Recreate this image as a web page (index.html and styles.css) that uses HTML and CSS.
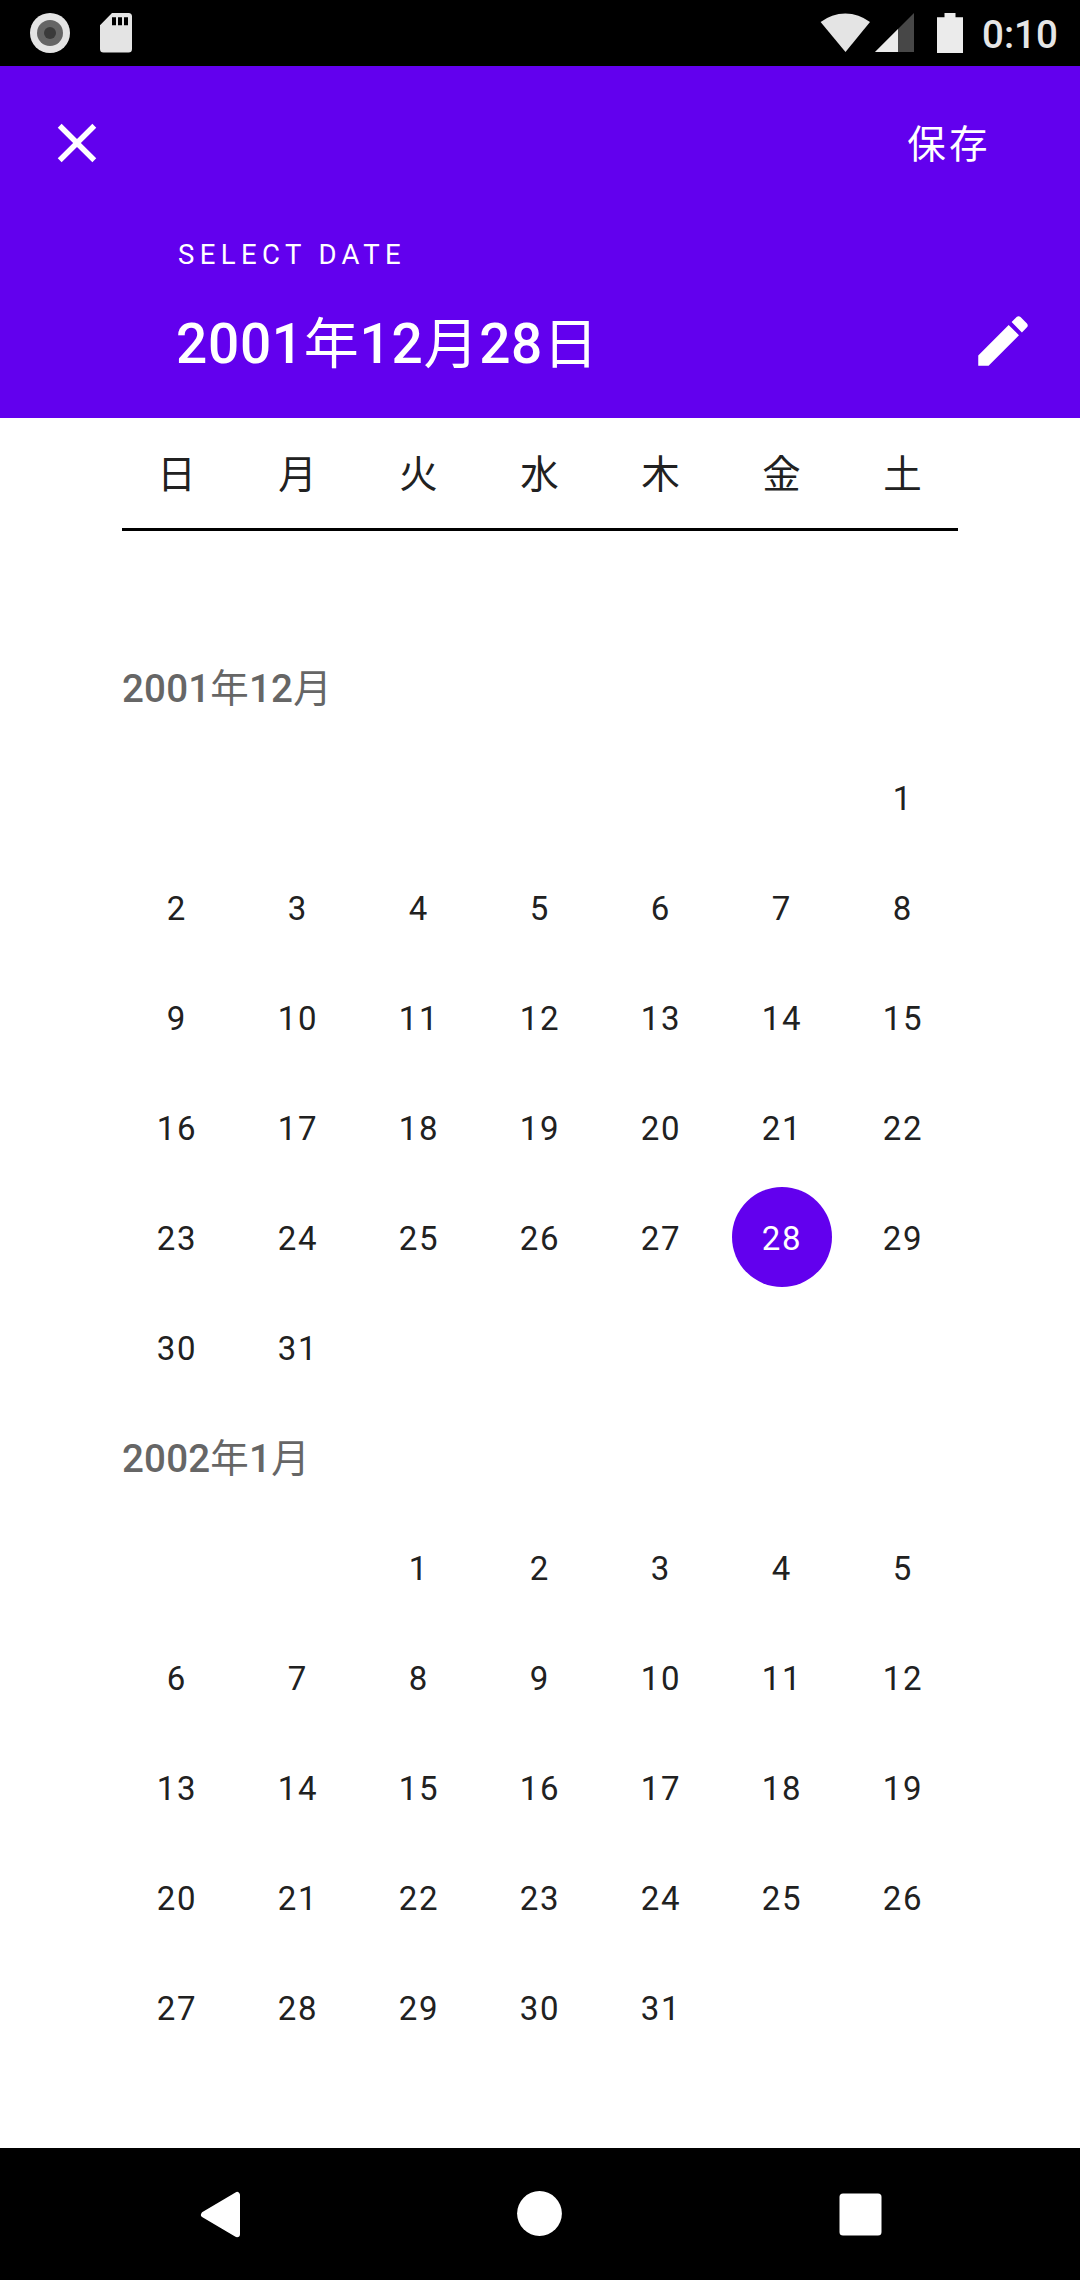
FILE: index.html
```html
<!DOCTYPE html>
<html lang="ja">
<head>
<meta charset="utf-8">
<title>日付の選択</title>
<link rel="stylesheet" href="styles.css">
</head>
<body>
<div class="screen">
  <div class="status-bar">
    <div class="status-left">
      <svg width="40" height="40" viewBox="0 0 40 40"><circle cx="20" cy="20" r="20" fill="#e4e4e4"/><circle cx="20" cy="20" r="13" fill="#656565"/><circle cx="20" cy="20" r="6" fill="#3a3a3a"/></svg>
      <svg width="32" height="40" viewBox="0 0 32 40"><path fill="#e4e4e4" fill-rule="evenodd" d="M12 0H28.500a3.500 3.500 0 0 1 3.500 3.500V36a3.500 3.500 0 0 1-3.500 3.500H3.500A3.500 3.500 0 0 1 0 36V12.300ZM12 4.300V12.300H16V4.300ZM18 4.300V12.300H22V4.300ZM24 4.300V12.300H28V4.300Z"/></svg>
    </div>
    <div class="status-right">
      <svg width="50" height="40" viewBox="0 0 50 40"><path fill="#e4e4e4" d="M.6 9A40 40 0 0 1 50 9L25.500 39Z"/></svg>
      <svg class="signal" width="39" height="40" viewBox="0 0 39 40"><path fill="#474747" d="M39 0V39H0Z"/><path fill="#ebebeb" d="M23 16V39H0Z"/></svg>
      <svg class="battery" width="26" height="40" viewBox="0 0 26 40"><path fill="#ebebeb" d="M7.500 0H18.500V4.200H26V40H0V4.200H7.500Z"/></svg>
      <span class="clock">0:10</span>
    </div>
  </div>

  <header class="header">
    <div class="toolbar">
      <svg width="66" height="66" viewBox="0 0 24 24"><path fill="#fff" d="M19 6.410 17.590 5 12 10.590 6.410 5 5 6.410 10.590 12 5 17.590 6.410 19 12 13.410 17.590 19 19 17.590 13.410 12z"/></svg>
      <span class="save">保存</span>
    </div>
    <div class="overline">SELECT DATE</div>
    <div class="selection">
      <h1 class="selected-date">2001<span class="unit">年</span>12<span class="unit">月</span>28<span class="unit">日</span></h1>
      <svg width="66" height="66" viewBox="0 0 24 24"><path fill="#fff" d="M3 17.250V21h3.750L17.810 9.940l-3.750-3.750L3 17.250zM20.710 7.040c.39-.39.39-1.020 0-1.410l-2.340-2.340c-.39-.39-1.020-.39-1.410 0l-1.830 1.830 3.750 3.750 1.830-1.830z"/></svg>
    </div>
  </header>

  <div class="weekdays week">
    <span>日</span><span>月</span><span>火</span><span>水</span><span>木</span><span>金</span><span>土</span>
  </div>

  <main class="months">
    <h2 class="month-title">2001<span class="unit">年</span>12<span class="unit">月</span></h2>
    <div class="week days">
      <span class="from-sat">1</span>
      <span>2</span><span>3</span><span>4</span><span>5</span><span>6</span><span>7</span><span>8</span>
      <span>9</span><span>10</span><span>11</span><span>12</span><span>13</span><span>14</span><span>15</span>
      <span>16</span><span>17</span><span>18</span><span>19</span><span>20</span><span>21</span><span>22</span>
      <span>23</span><span>24</span><span>25</span><span>26</span><span>27</span><span class="selected">28</span><span>29</span>
      <span>30</span><span>31</span>
    </div>
    <h2 class="month-title">2002<span class="unit">年</span>1<span class="unit">月</span></h2>
    <div class="week days">
      <span class="from-tue">1</span><span>2</span><span>3</span><span>4</span><span>5</span>
      <span>6</span><span>7</span><span>8</span><span>9</span><span>10</span><span>11</span><span>12</span>
      <span>13</span><span>14</span><span>15</span><span>16</span><span>17</span><span>18</span><span>19</span>
      <span>20</span><span>21</span><span>22</span><span>23</span><span>24</span><span>25</span><span>26</span>
      <span>27</span><span>28</span><span>29</span><span>30</span><span>31</span>
    </div>
  </main>

  <nav class="nav-bar">
    <svg width="60" height="60" viewBox="0 0 60 60"><path fill="#fff" stroke="#fff" stroke-width="6" stroke-linejoin="round" d="M14 32.700 47 13V52.200Z"/></svg>
    <svg width="60" height="60" viewBox="0 0 60 60"><circle cx="29.500" cy="31.500" r="22.400" fill="#fff"/></svg>
    <svg width="60" height="60" viewBox="0 0 60 60"><rect x="9.500" y="11.500" width="42" height="42" rx="3.500" fill="#fff"/></svg>
  </nav>
</div>
</body>
</html>
```
FILE: styles.css
```css
* {
  box-sizing: border-box;
}

body {
  margin: 0;
  background: #fff;
  font-family: Roboto, "Noto Sans CJK JP", sans-serif;
  color: #212121;
}

svg {
  display: block;
  flex: none;
}

.screen {
  display: flex;
  flex-direction: column;
  width: 1080px;
  height: 2280px;
}

.status-bar {
  display: flex;
  justify-content: space-between;
  height: 66px;
  padding: 13px 21px 0 30px;
  background: #000;
}

.status-left {
  display: flex;
  gap: 30px;
}

.status-right {
  display: flex;
}

.signal {
  margin-left: 5px;
}

.battery {
  margin: 0 19px 0 23px;
}

.clock {
  width: 77px;
  color: #e6e6e6;
  font-size: 38.5px;
  font-weight: 500;
  line-height: 43px;
}

.unit {
  font-weight: 400;
}

.header {
  height: 352px;
  background: #6200ee;
  color: #fff;
}

.toolbar {
  display: flex;
  justify-content: space-between;
  align-items: center;
  height: 154px;
  padding: 0 89px 0 44px;
}

.save {
  padding-top: 3px;
  font-size: 38.5px;
  font-weight: 400;
  line-height: 66px;
  letter-spacing: 3.4px;
}

.overline {
  margin-top: 17px;
  padding-left: 178px;
  font-size: 27.5px;
  line-height: 36px;
  letter-spacing: 5.4px;
}

.selection {
  display: flex;
  justify-content: space-between;
  align-items: center;
  height: 66px;
  margin-top: 35px;
  padding: 0 44px 0 176px;
}

.selected-date {
  margin: 0;
  padding-top: 6px;
  font-size: 55px;
  font-weight: 500;
  line-height: 66px;
  letter-spacing: 0.69px;
}

.week {
  display: grid;
  grid-template-columns: repeat(7, 121px);
  justify-content: center;
}

.week span {
  display: flex;
  align-items: center;
  justify-content: center;
}

.weekdays {
  height: 113px;
  margin: 0 122px;
  border-bottom: 3px solid #000;
  font-size: 38.5px;
}

.weekdays span {
  padding: 0 1px 4px 0;
}

.months {
  flex: 1;
  padding-top: 101px;
}

.month-title {
  height: 110px;
  margin: 0;
  padding: 2px 0 0 122px;
  color: #666;
  font-size: 38.5px;
  font-weight: 500;
  line-height: 110px;
  letter-spacing: 0.2px;
}

.days {
  grid-auto-rows: 110px;
  font-size: 33px;
  letter-spacing: 1.8px;
}

.days span {
  padding-top: 2px;
}

.from-sat {
  grid-column-start: 7;
}

.from-tue {
  grid-column-start: 3;
}

.week .selected {
  width: 100px;
  height: 100px;
  place-self: center;
  border-radius: 50%;
  background: #6200ee;
  color: #fff;
}

.nav-bar {
  display: flex;
  justify-content: space-between;
  height: 132px;
  padding: 34px 190px 0;
  background: #000;
}
```
